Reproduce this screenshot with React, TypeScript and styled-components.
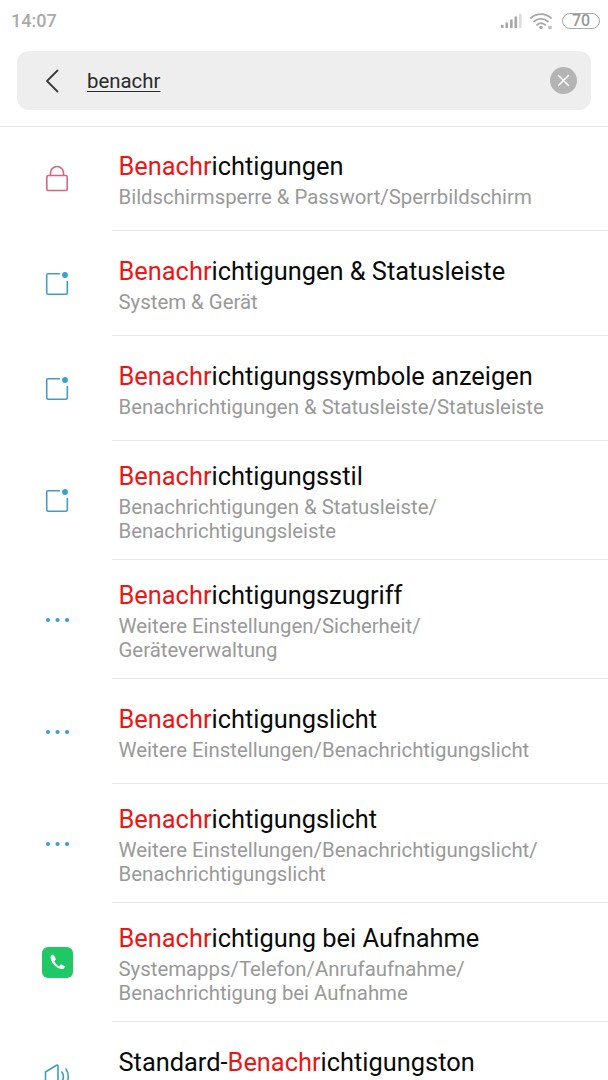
import React from "react";
import styled, { createGlobalStyle } from "styled-components";

const Global = createGlobalStyle`
  html, body { margin: 0; padding: 0; background: #fff; }
  body { font-family: Roboto, "Liberation Sans", sans-serif; }
`;

const Screen = styled.div`
  width: 608px;
  height: 1080px;
  overflow: hidden;
  background: #fff;
  display: flex;
  flex-direction: column;
`;

const StatusBar = styled.div`
  height: 41px;
  flex: none;
  display: flex;
  align-items: center;
  justify-content: space-between;
  padding: 0 8px 0 11px;
`;

const Clock = styled.span`
  font-size: 18px;
  font-weight: 500;
  color: #aaaaaa;
`;

const StatusIcons = styled.div`
  display: flex;
  align-items: center;
  gap: 8px;
`;

const Battery = styled.div`
  width: 38px;
  height: 16px;
  border: 1.5px solid #a8a8a8;
  border-radius: 8px;
  box-sizing: border-box;
  display: flex;
  align-items: center;
  justify-content: center;
  font-size: 16px;
  font-weight: 500;
  color: #9a9a9a;
`;

const SearchWrap = styled.div`
  flex: none;
  height: 86px;
  padding: 10px 17px 0;
  box-sizing: border-box;
  border-bottom: 1px solid #e6e6e6;
`;

const SearchBox = styled.div`
  height: 59px;
  background: #eeeeee;
  border-radius: 12px;
  display: flex;
  align-items: center;
  padding: 0 14px 0 28px;
`;

const Query = styled.span`
  flex: 1;
  margin-left: 28px;
  font-size: 20.4px;
  color: #2a2a2a;
  text-decoration: underline;
  text-underline-offset: 3px;
  text-decoration-thickness: 1px;
`;

const Clear = styled.div`
  width: 27px;
  height: 27px;
  border-radius: 50%;
  background: #b4b4b4;
  display: flex;
  align-items: center;
  justify-content: center;
`;

const List = styled.div`
  display: flex;
  flex-direction: column;
`;

const Row = styled.div`
  display: flex;
  flex: none;
`;

const IconCell = styled.div<{ $top: number }>`
  width: 112px;
  flex: none;
  display: flex;
  justify-content: center;
  padding: ${(p) => p.$top}px 0 0 2px;
  box-sizing: border-box;
`;

const Body = styled.div<{ $h: number; $pad: number; $last?: boolean }>`
  flex: 1;
  height: ${(p) => p.$h}px;
  box-sizing: border-box;
  padding: ${(p) => p.$pad}px 0 0 6.5px;
  border-bottom: ${(p) => (p.$last ? "none" : "1px solid #e6e6e6")};
`;

const Title = styled.div`
  font-size: 25.4px;
  line-height: 30px;
  color: #0a0a0a;
  white-space: nowrap;
`;

const Mark = styled.span`
  color: #f01414;
`;

const Sub = styled.div`
  margin-top: 4px;
  font-size: 20.36px;
  line-height: 24px;
  color: #999999;
  white-space: pre-line;
`;

const lineCaps = { fill: "none", strokeLinecap: "round", strokeLinejoin: "round" } as const;

const LockIcon = () => (
  <svg width="24" height="28" viewBox="0 0 24 28">
    <rect x="1.800" y="10.500" width="20.400" height="15" rx="1.500" stroke="#d6667f" strokeWidth="1.600" {...lineCaps} />
    <path d="M5.500 10.500V8a6.500 6.500 0 0 1 13 0v2.500" stroke="#d6667f" strokeWidth="1.600" {...lineCaps} />
  </svg>
);

const NoticeIcon = () => (
  <svg width="24" height="24" viewBox="0 0 24 24">
    <path d="M14.500 1.800H3.200A1.500 1.500 0 0 0 1.700 3.300v17.400a1.500 1.500 0 0 0 1.500 1.500h17.600a1.500 1.500 0 0 0 1.500-1.500V9.500" stroke="#3f9dc9" strokeWidth="1.600" {...lineCaps} />
    <circle cx="20" cy="3" r="2.900" fill="#3f9dc9" />
  </svg>
);

const DotsIcon = () => (
  <svg width="24" height="6" viewBox="0 0 24 6">
    <circle cx="3" cy="3" r="2.100" fill="#3f9dc9" />
    <circle cx="12.500" cy="3" r="2.100" fill="#3f9dc9" />
    <circle cx="22" cy="3" r="2.100" fill="#3f9dc9" />
  </svg>
);

const PhoneIcon = () => (
  <svg width="31" height="31" viewBox="0 0 31 31">
    <rect width="31" height="31" rx="6" fill="#1fc865" />
    <path d="M10.600 7.400c-1.100.3-2 1.300-2 2.700 0 5.600 5.700 11.800 11.600 12 1.400 0 2.300-.8 2.700-2 .1-.5 0-.9-.5-1.100l-3-1.400c-.5-.2-.9-.1-1.200.3l-1 1.300c-2.200-.9-4-2.800-4.900-5l1.200-1.100c.4-.3.500-.7.300-1.200l-1.400-3c-.3-.5-.6-.6-1.800-.5z" fill="#fff" />
  </svg>
);

const SpeakerIcon = () => (
  <svg width="26" height="28" viewBox="0 0 26 28">
    <path d="M1.500 9 12.500 2.200c.8-.4 1.500.1 1.500 1V28M1.500 9V28" stroke="#3f9dc9" strokeWidth="1.600" {...lineCaps} />
    <path d="M18 9c1.700 2.800 1.700 6.500 0 9.500M22 6c3 4.300 3 11 0 15.500" stroke="#3f9dc9" strokeWidth="1.600" {...lineCaps} />
  </svg>
);

type Item = {
  icon: React.ReactNode;
  top: number;
  pad: number;
  before?: string;
  rest: string;
  sub?: string;
  h: number;
};

const items: Item[] = [
  { icon: <LockIcon />, top: 38, pad: 24, rest: "ichtigungen", sub: "Bildschirmsperre & Passwort/Sperrbildschirm", h: 104 },
  { icon: <NoticeIcon />, top: 41, pad: 25, rest: "ichtigungen & Statusleiste", sub: "System & Gerät", h: 105 },
  { icon: <NoticeIcon />, top: 41, pad: 25, rest: "ichtigungssymbole anzeigen", sub: "Benachrichtigungen & Statusleiste/Statusleiste", h: 105 },
  { icon: <NoticeIcon />, top: 48, pad: 20, rest: "ichtigungsstil", sub: "Benachrichtigungen & Statusleiste/\nBenachrichtigungsleiste", h: 119 },
  { icon: <DotsIcon />, top: 57, pad: 20, rest: "ichtigungszugriff", sub: "Weitere Einstellungen/Sicherheit/\nGeräteverwaltung", h: 119 },
  { icon: <DotsIcon />, top: 50, pad: 25, rest: "ichtigungslicht", sub: "Weitere Einstellungen/Benachrichtigungslicht", h: 105 },
  { icon: <DotsIcon />, top: 57, pad: 20, rest: "ichtigungslicht", sub: "Weitere Einstellungen/Benachrichtigungslicht/\nBenachrichtigungslicht", h: 119 },
  { icon: <PhoneIcon />, top: 44, pad: 20, rest: "ichtigung bei Aufnahme", sub: "Systemapps/Telefon/Anrufaufnahme/\nBenachrichtigung bei Aufnahme", h: 119 },
  { icon: <SpeakerIcon />, top: 41, pad: 25, before: "Standard-", rest: "ichtigungston", h: 60 },
];

export default function App() {
  return (
    <Screen>
      <Global />
      <StatusBar>
        <Clock>14:07</Clock>
        <StatusIcons>
          <svg width="21" height="14" viewBox="0 0 21 14">
            <rect x="0" y="11" width="2.600" height="3" fill="#a8a8a8" />
            <rect x="4.500" y="8.500" width="2.600" height="5.500" fill="#a8a8a8" />
            <rect x="9" y="5.500" width="2.600" height="8.500" fill="#a8a8a8" />
            <rect x="13.500" y="2.500" width="2.600" height="11.500" fill="#a8a8a8" />
            <rect x="18" y="0" width="2.600" height="14" fill="#dddddd" />
          </svg>
          <svg width="24" height="18" viewBox="0 0 24 18">
            <path d="M1 6a15 15 0 0 1 20 0M4 9.500a10.500 10.500 0 0 1 14 0M7 12.800a6 6 0 0 1 8 0" stroke="#a8a8a8" strokeWidth="1.800" fill="none" strokeLinecap="round" />
            <circle cx="11" cy="15.500" r="1.800" fill="#a8a8a8" />
            <circle cx="20" cy="15.500" r="2" fill="#c4c4c4" />
          </svg>
          <Battery>70</Battery>
        </StatusIcons>
      </StatusBar>
      <SearchWrap>
        <SearchBox>
          <svg width="14" height="24" viewBox="0 0 14 24">
            <path d="M12.500 1.500 2 12l10.500 10.500" stroke="#3a3a3a" strokeWidth="1.800" fill="none" strokeLinecap="round" strokeLinejoin="round" />
          </svg>
          <Query>benachr</Query>
          <Clear>
            <svg width="13" height="13" viewBox="0 0 13 13">
              <path d="M1.500 1.500l10 10M11.500 1.500l-10 10" stroke="#fff" strokeWidth="1.500" strokeLinecap="round" />
            </svg>
          </Clear>
        </SearchBox>
      </SearchWrap>
      <List>
        {items.map((it, i) => (
          <Row key={i}>
            <IconCell $top={it.top}>{it.icon}</IconCell>
            <Body $h={it.h} $pad={it.pad} $last={i === items.length - 1}>
              <Title>
                {it.before}
                <Mark>Benachr</Mark>
                {it.rest}
              </Title>
              {it.sub && <Sub>{it.sub}</Sub>}
            </Body>
          </Row>
        ))}
      </List>
    </Screen>
  );
}
